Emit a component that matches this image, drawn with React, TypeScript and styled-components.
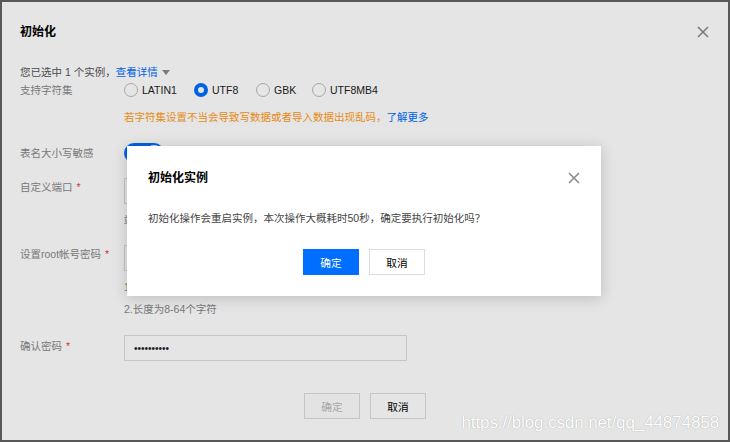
import React from "react";
import styled, { createGlobalStyle } from "styled-components";

const GlobalStyle = createGlobalStyle`
  body {
    margin: 0;
    font-family: "Liberation Sans", "Noto Sans CJK SC", sans-serif;
    font-size: 10.5px;
    color: #444;
  }
`;

const Frame = styled.div`
  position: relative;
  width: 730px;
  height: 442px;
  box-sizing: border-box;
  border: 2px solid #585858;
  background: #fff;
  overflow: hidden;
`;

const Header = styled.div`
  display: flex;
  justify-content: space-between;
  align-items: center;
  padding: 20px 19px 0 18px;
  height: 20px;
`;

const Title = styled.h2`
  margin: 0;
  font-size: 12px;
  font-weight: 700;
  line-height: 20px;
  color: #000;
`;

const CloseIcon = ({ size = 12 }: { size?: number }) => (
  <svg width={size} height={size} viewBox="0 0 12 12">
    <path d="M1 1L11 11M11 1L1 11" stroke="#888" strokeWidth="1.5" fill="none" />
  </svg>
);

const Body = styled.div`
  padding: 0 18px;
`;

const Intro = styled.div`
  margin-top: 21px;
  line-height: 18px;
  color: #555;
`;

const Link = styled.a`
  color: #006eff;
  text-decoration: none;
`;

const Caret = styled.span`
  display: inline-block;
  margin-left: 4px;
  border-left: 4px solid transparent;
  border-right: 4px solid transparent;
  border-top: 5px solid #888;
  vertical-align: 1px;
`;

const Row = styled.div<{ $mt?: number }>`
  display: flex;
  align-items: flex-start;
  margin-top: ${(p) => p.$mt ?? 0}px;
`;

const Label = styled.div<{ $pt?: number }>`
  width: 104px;
  flex: none;
  line-height: 18px;
  padding-top: ${(p) => p.$pt ?? 0}px;
  color: #888;
`;

const Star = styled.span`
  color: #e54545;
  margin-left: 4px;
`;

const Field = styled.div`
  display: flex;
  flex-direction: column;
`;

const Radios = styled.div`
  display: flex;
  align-items: center;
  height: 18px;
`;

const Option = styled.label<{ $w?: number }>`
  display: flex;
  align-items: center;
  width: ${(p) => (p.$w ? `${p.$w}px` : "auto")};
  color: #222;
`;

const Circle = styled.span<{ $on?: boolean }>`
  box-sizing: border-box;
  width: 14px;
  height: 14px;
  border-radius: 50%;
  margin-right: 4px;
  background: #fff;
  border: ${(p) => (p.$on ? "4px solid #006eff" : "1px solid #bbb")};
`;

const Hint = styled.div<{ $tone?: "warn" | "muted"; $mt?: number }>`
  margin-top: ${(p) => p.$mt ?? 0}px;
  line-height: ${(p) => (p.$tone === "warn" ? 18 : 22)}px;
  color: ${(p) => (p.$tone === "warn" ? "#ff9c19" : "#888")};
  white-space: nowrap;
`;

const Switch = styled.span`
  position: relative;
  display: block;
  width: 40px;
  height: 20px;
  border-radius: 10px;
  background: #006eff;
  &::after {
    content: "";
    position: absolute;
    top: 2px;
    right: 2px;
    width: 16px;
    height: 16px;
    border-radius: 50%;
    background: #fff;
  }
`;

const Input = styled.div`
  box-sizing: border-box;
  width: 283px;
  height: 26px;
  border: 1px solid #ddd;
  background: #fff;
  display: flex;
  align-items: center;
  padding-left: 9px;
  color: #444;
`;

const Dots = styled.span`
  font-size: 10px;
  color: #222;
`;

const Footer = styled.div<{ $mt?: number }>`
  display: flex;
  gap: 10px;
  justify-content: center;
  margin-top: ${(p) => p.$mt ?? 0}px;
`;

const Button = styled.button<{ $kind?: "primary" | "default" | "disabled" }>`
  box-sizing: border-box;
  width: 56px;
  height: 26px;
  font-family: inherit;
  font-size: 10.7px;
  padding: 0;
  border: 1px solid
    ${(p) => (p.$kind === "primary" ? "#006eff" : "#ddd")};
  background: ${(p) =>
    p.$kind === "primary" ? "#006eff" : p.$kind === "disabled" ? "#fdfdfd" : "#fff"};
  color: ${(p) =>
    p.$kind === "primary" ? "#fff" : p.$kind === "disabled" ? "#bbb" : "#000"};
`;

const Overlay = styled.div`
  position: absolute;
  inset: 0;
  background: rgba(0, 0, 0, 0.1);
  display: flex;
  align-items: center;
  justify-content: center;
`;

const Modal = styled.div`
  box-sizing: border-box;
  width: 474px;
  height: 150px;
  margin-left: -2px;
  background: #fff;
  box-shadow: 0 2px 14px rgba(0, 0, 0, 0.18);
  padding: 22px 21px 0 21px;
`;

const ModalHead = styled.div`
  display: flex;
  justify-content: space-between;
  align-items: center;
  height: 20px;
`;

const ModalText = styled.p`
  margin: 21px 0 0;
  line-height: 18px;
  color: #444;
`;

const Watermark = styled.div`
  position: absolute;
  right: 9px;
  bottom: 7px;
  font-size: 17px;
  line-height: 20px;
  color: #fff;
  text-shadow: 0 0 1px rgba(0, 0, 0, 0.35);
  letter-spacing: -0.1px;
`;

const charsets = [
  { name: "LATIN1", w: 70 },
  { name: "UTF8", w: 62, on: true },
  { name: "GBK", w: 56 },
  { name: "UTF8MB4" },
];

const App = () => {
  return (
    <>
      <GlobalStyle />
      <Frame>
        <Header>
          <Title>初始化</Title>
          <CloseIcon />
        </Header>
        <Body>
          <Intro>
            您已选中 1 个实例，<Link>查看详情</Link>
            <Caret />
          </Intro>
          <Row>
            <Label>支持字符集</Label>
            <Radios>
              {charsets.map((c) => (
                <Option key={c.name} $w={c.w}>
                  <Circle $on={c.on} />
                  {c.name}
                </Option>
              ))}
            </Radios>
          </Row>
          <Row $mt={9}>
            <Label />
            <Hint $tone="warn">
              若字符集设置不当会导致写数据或者导入数据出现乱码，<Link>了解更多</Link>
            </Hint>
          </Row>
          <Row $mt={17}>
            <Label $pt={1}>表名大小写敏感</Label>
            <Switch />
          </Row>
          <Row $mt={15}>
            <Label $pt={0}>
              自定义端口<Star>*</Star>
            </Label>
            <Field>
              <Input>3306</Input>
              <Hint $tone="muted" $mt={5}>
                端口
              </Hint>
            </Field>
          </Row>
          <Row $mt={14}>
            <Label $pt={0}>
              设置root帐号密码<Star>*</Star>
            </Label>
            <Field>
              <Input />
              <Hint $tone="muted" $mt={5}>
                1.至少包含两种字符
              </Hint>
              <Hint $tone="muted">2.长度为8-64个字符</Hint>
            </Field>
          </Row>
          <Row $mt={15}>
            <Label $pt={2}>
              确认密码<Star>*</Star>
            </Label>
            <Input>
              <Dots>••••••••••</Dots>
            </Input>
          </Row>
          <Footer $mt={32}>
            <Button $kind="disabled">确定</Button>
            <Button>取消</Button>
          </Footer>
        </Body>
        <Overlay>
          <Modal>
            <ModalHead>
              <Title>初始化实例</Title>
              <CloseIcon />
            </ModalHead>
            <ModalText>
              初始化操作会重启实例，本次操作大概耗时50秒，确定要执行初始化吗？
            </ModalText>
            <Footer $mt={22}>
              <Button $kind="primary">确定</Button>
              <Button>取消</Button>
            </Footer>
          </Modal>
        </Overlay>
        <Watermark>https://blog.csdn.net/qq_44874858</Watermark>
      </Frame>
    </>
  );
};

export default App;
